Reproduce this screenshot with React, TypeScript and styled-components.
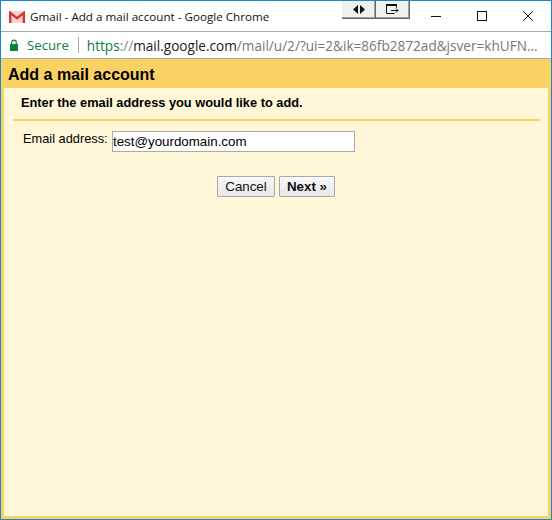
import React from 'react';
import styled, { createGlobalStyle } from 'styled-components';

const Global = createGlobalStyle`
  html, body {
    margin: 0;
    padding: 0;
    background: #fff;
  }
`;

const Win = styled.div`
  box-sizing: border-box;
  width: 552px;
  height: 520px;
  border: 1px solid #1a86d0;
  display: flex;
  flex-direction: column;
  overflow: hidden;
  font-family: 'Liberation Sans', Arial, sans-serif;
  color: #000;
`;

const TitleBar = styled.div`
  position: relative;
  height: 30px;
  flex: none;
  display: flex;
  align-items: center;
  background: #fff;
  border-bottom: 1px solid #a9a9a9;
`;

const Favicon = styled.svg`
  width: 16px;
  height: 12px;
  margin: 1px 0 0 8px;
  flex: none;
`;

const TitleText = styled.span`
  margin-left: 5px;
  font-family: 'Open Sans', 'Noto Sans', sans-serif;
  font-size: 11.65px;
  color: #111;
`;

const ExtButtons = styled.div`
  position: absolute;
  left: 341px;
  top: -1px;
  display: flex;
`;

const ExtButton = styled.div`
  box-sizing: border-box;
  width: 34px;
  height: 19px;
  background: #f0f0f0;
  border-right: 1px solid #696969;
  border-bottom: 1px solid #696969;
  box-shadow: inset -1px -1px 0 #a0a0a0;
  display: flex;
  align-items: center;
  justify-content: center;
`;

const Controls = styled.div`
  margin-left: auto;
  display: flex;
`;

const Control = styled.div`
  width: 46px;
  height: 30px;
  display: flex;
  align-items: center;
  justify-content: center;
`;

const AddressBar = styled.div`
  height: 26px;
  flex: none;
  display: flex;
  align-items: center;
  background: #fff;
  border-bottom: 1px solid #a9a9a9;
  font-family: 'Open Sans', 'Noto Sans', sans-serif;
  font-size: 13.6px;
  white-space: nowrap;
`;

const Lock = styled.svg`
  width: 10px;
  height: 12px;
  margin-left: 8px;
  flex: none;
`;

const Secure = styled.span`
  margin-left: 8px;
  font-size: 13.2px;
  color: #0b8043;
`;

const Divider = styled.span`
  width: 1px;
  height: 16px;
  background: #a8a8a8;
  margin: 0 8px 0 9px;
`;

const UrlScheme = styled.span`
  color: #0b8043;
`;

const UrlSlashes = styled.span`
  color: #888;
`;

const UrlHost = styled.span`
  color: #222;
`;

const UrlRest = styled.span`
  color: #777;
`;

const Page = styled.div`
  flex: 1;
  display: flex;
  flex-direction: column;
  background: #fad163;
  padding: 0 3px 3px 3px;
  min-height: 0;
`;

const Heading = styled.h1`
  margin: 0;
  height: 29px;
  flex: none;
  line-height: 31px;
  padding-left: 4px;
  font-size: 16px;
  font-weight: bold;
`;

const Panel = styled.div`
  flex: 1;
  background: #fff7d7;
  padding: 0 8px 0 9px;
`;

const Intro = styled.div`
  height: 33px;
  line-height: 30px;
  box-sizing: border-box;
  padding-left: 8px;
  font-size: 12.8px;
  font-weight: bold;
  border-bottom: 2px solid #fad163;
`;

const Row = styled.div`
  display: flex;
  margin: 10px 0 0 10px;
`;

const Label = styled.label`
  width: 89px;
  font-size: 12.8px;
  line-height: 15px;
`;

const TextInput = styled.input`
  box-sizing: border-box;
  width: 243px;
  height: 21px;
  margin: 0;
  padding: 0;
  border: 1px solid #a9a9a9;
  background: #fff;
  font-family: 'Liberation Sans', Arial, sans-serif;
  font-size: 13.33px;
  color: #000;
  outline: none;
`;

const Buttons = styled.div`
  display: flex;
  gap: 4px;
  margin: 24px 0 0 204px;
`;

const Button = styled.button<{ $primary?: boolean }>`
  box-sizing: border-box;
  height: 21px;
  width: ${p => (p.$primary ? '56px' : '58px')};
  margin: 0;
  padding: 0;
  border: 1px solid #a9a9a9;
  border-radius: 1px;
  background: linear-gradient(#f8f8f8, #e8e8e8);
  font-family: 'Liberation Sans', Arial, sans-serif;
  font-size: 13.33px;
  font-weight: ${p => (p.$primary ? 'bold' : 'normal')};
  color: #111;
`;

export default function App() {
  return (
    <>
      <Global />
      <Win>
        <TitleBar>
          <Favicon viewBox="0 0 16 12">
            <rect width="16" height="12" fill="#f6d5d2" />
            <path d="M1.2 12V1.8L8 7.2l6.8-5.4V12" fill="none" stroke="#d93a30" strokeWidth="2.4" />
          </Favicon>
          <TitleText>Gmail - Add a mail account - Google Chrome</TitleText>
          <ExtButtons>
            <ExtButton>
              <svg width="12" height="9" viewBox="0 0 12 9">
                <path d="M5 0v9L0 4.5zM7 0v9l5-4.5z" fill="#111" />
              </svg>
            </ExtButton>
            <ExtButton>
              <svg width="13" height="10" viewBox="0 0 13 10" fill="none" stroke="#111">
                <path d="M0 1h11" strokeWidth="2" />
                <path d="M.5 1v8.5h8M10.5 1v2.5" />
                <path d="M5 6.5h7M10 4.5l2 2-2 2" />
              </svg>
            </ExtButton>
          </ExtButtons>
          <Controls>
            <Control>
              <svg width="10" height="10" viewBox="0 0 10 10">
                <path d="M0 5.5h10" stroke="#111" />
              </svg>
            </Control>
            <Control>
              <svg width="10" height="10" viewBox="0 0 10 10">
                <rect x="0.5" y="0.5" width="9" height="9" fill="none" stroke="#111" />
              </svg>
            </Control>
            <Control>
              <svg width="10" height="10" viewBox="0 0 10 10">
                <path d="M0 0l10 10M10 0L0 10" stroke="#111" />
              </svg>
            </Control>
          </Controls>
        </TitleBar>
        <AddressBar>
          <Lock viewBox="0 0 10 12">
            <rect x="1" y="5" width="8" height="7" fill="#0b8043" />
            <path d="M2.7 5V3.4a2.3 2.3 0 0 1 4.6 0V5" fill="none" stroke="#0b8043" strokeWidth="1.2" />
          </Lock>
          <Secure>Secure</Secure>
          <Divider />
          <UrlScheme>https</UrlScheme>
          <UrlSlashes>://</UrlSlashes>
          <UrlHost>mail.google.com</UrlHost>
          <UrlRest>/mail/u/2/?ui=2&amp;ik=86fb2872ad&amp;jsver=khUFN...</UrlRest>
        </AddressBar>
        <Page>
          <Heading>Add a mail account</Heading>
          <Panel>
            <Intro>Enter the email address you would like to add.</Intro>
            <Row>
              <Label>Email address:</Label>
              <TextInput defaultValue="test@yourdomain.com" />
            </Row>
            <Buttons>
              <Button>Cancel</Button>
              <Button $primary>Next »</Button>
            </Buttons>
          </Panel>
        </Page>
      </Win>
    </>
  );
}
